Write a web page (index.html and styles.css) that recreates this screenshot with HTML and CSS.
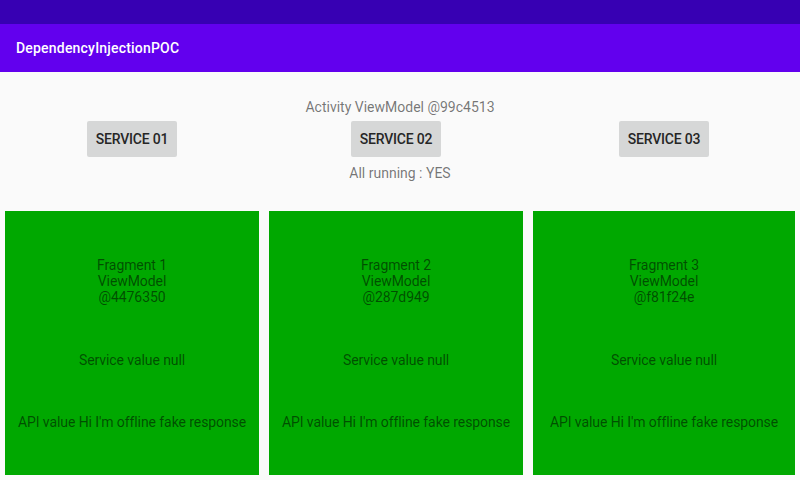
FILE: index.html
```html
<!DOCTYPE html>
<html>
<head>
<meta charset="utf-8">
<link rel="stylesheet" href="styles.css">
</head>
<body>
<div class="status-bar"></div>
<header class="toolbar">DependencyInjectionPOC</header>
<main class="content">
  <p class="info">Activity ViewModel @99c4513</p>
  <div class="columns buttons">
    <div class="cell"><button class="btn">SERVICE 01</button></div>
    <div class="cell"><button class="btn">SERVICE 02</button></div>
    <div class="cell"><button class="btn">SERVICE 03</button></div>
  </div>
  <p class="info running">All running : YES</p>
  <div class="columns cards">
    <section class="card">
      <p class="line">Fragment 1<br>ViewModel<br>@4476350</p>
      <p class="line service">Service value null</p>
      <p class="line api">API value Hi I'm offline fake response</p>
    </section>
    <section class="card">
      <p class="line">Fragment 2<br>ViewModel<br>@287d949</p>
      <p class="line service">Service value null</p>
      <p class="line api">API value Hi I'm offline fake response</p>
    </section>
    <section class="card">
      <p class="line">Fragment 3<br>ViewModel<br>@f81f24e</p>
      <p class="line service">Service value null</p>
      <p class="line api">API value Hi I'm offline fake response</p>
    </section>
  </div>
</main>
</body>
</html>
```
FILE: styles.css
```css
* { box-sizing: border-box; }
html, body {
  margin: 0;
  padding: 0;
  width: 800px;
  height: 480px;
  overflow: hidden;
  background: #fafafa;
  font-family: Roboto, "Liberation Sans", sans-serif;
}
.status-bar {
  height: 24px;
  background: #3700b3;
}
.toolbar {
  height: 48px;
  background: #6200ee;
  color: #ffffff;
  display: flex;
  align-items: center;
  padding-left: 16px;
  font-size: 14px;
  font-weight: 500;
  letter-spacing: 0.2px;
}
.content {
  padding-top: 27px;
}
.info {
  margin: 0;
  text-align: center;
  font-size: 14px;
  line-height: 16px;
  color: rgba(0, 0, 0, 0.54);
}
.running {
  margin-top: 8px;
}
.columns {
  display: grid;
  grid-template-columns: 254px 254px 262px;
  column-gap: 10px;
  padding: 0 5px;
}
.buttons {
  margin-top: 6px;
}
.cell {
  display: flex;
  justify-content: center;
}
.btn {
  height: 36px;
  width: 90px;
  padding: 0;
  border: none;
  border-radius: 2px;
  background: #d6d7d7;
  color: #262626;
  font-family: Roboto, "Liberation Sans", sans-serif;
  font-size: 14px;
  font-weight: 500;
  letter-spacing: -0.2px;
}
.cards {
  margin-top: 30px;
}
.card {
  height: 264px;
  background: #00a800;
  display: flex;
  flex-direction: column;
  align-items: center;
  padding-top: 46px;
}
.line {
  margin: 0;
  text-align: center;
  font-size: 14px;
  line-height: 16px;
  letter-spacing: -0.08px;
  color: rgba(0, 0, 0, 0.54);
}
.service {
  margin-top: 47px;
}
.api {
  margin-top: 46px;
}
```
